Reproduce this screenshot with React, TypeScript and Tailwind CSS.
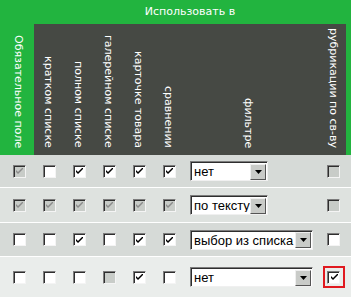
const GREEN = "bg-[#22b43f]";

type Box = { c: boolean; d?: boolean };

interface Row {
    cells: Box[];
    select: string;
    selW: string;
    last: Box;
    bg: string;
    h: string;
    mark?: boolean;
}

const rows: Row[] = [
    {
        cells: [{ c: true, d: true }, { c: false }, { c: true }, { c: true }, { c: true }, { c: true }],
        select: "нет",
        selW: "w-[78px]",
        last: { c: false, d: true },
        bg: "bg-[#d6dad7]",
        h: "h-[33px]",
    },
    {
        cells: [
            { c: true, d: true },
            { c: true, d: true },
            { c: true, d: true },
            { c: true, d: true },
            { c: true, d: true },
            { c: true, d: true },
        ],
        select: "по тексту",
        selW: "w-[78px]",
        last: { c: false, d: true },
        bg: "bg-[#dee2df]",
        h: "h-[35px]",
    },
    {
        cells: [{ c: false }, { c: false }, { c: true }, { c: false }, { c: true }, { c: true }],
        select: "выбор из списка",
        selW: "w-[123px]",
        last: { c: false },
        bg: "bg-[#d6dad7]",
        h: "h-[34px]",
    },
    {
        cells: [{ c: false }, { c: false }, { c: false }, { c: false, d: true }, { c: true }, { c: false }],
        select: "нет",
        selW: "w-[123px]",
        last: { c: true },
        bg: "bg-[#eaedeb]",
        h: "h-[41px]",
        mark: true,
    },
];

const heads = ["кратком списке", "полном списке", "галерейном списке", "карточке товара", "сравнении"];

function Check({ c, d }: Box) {
    return (
        <span
            className={`flex h-[13px] w-[13px] items-center justify-center border border-t-[#7c7c7c] border-l-[#7c7c7c] border-r-[#f4f4f4] border-b-[#f4f4f4] shadow-[inset_1px_1px_0_#2e2e2e] ${
                d ? "bg-[#c8ccc8]" : "bg-white"
            }`}
        >
            {c && (
                <svg width="7" height="7" viewBox="0 0 7 7" className="ml-[1px] mt-[1px]">
                    <path d="M0 2 L0 4 L2 6 L7 1 L7 -1 L2 4 Z" fill={d ? "#8c8c8c" : "#000"} />
                </svg>
            )}
        </span>
    );
}

function Select({ label, w }: { label: string; w: string }) {
    return (
        <div
            className={`flex h-[20px] ${w} items-center border border-t-[#7c7c7c] border-l-[#7c7c7c] border-r-[#f0f0f0] border-b-[#f0f0f0] bg-white shadow-[inset_1px_1px_0_#2e2e2e]`}
        >
            <span className="flex-1 overflow-hidden whitespace-nowrap pl-[3px] pt-[1px] font-['Liberation_Sans',sans-serif] text-[13px] leading-none text-black">
                {label}
            </span>
            <span className="mr-[1px] mt-[1px] flex h-[16px] w-[16px] shrink-0 items-center justify-center border border-t-[#eeeeee] border-l-[#eeeeee] border-r-[#555] border-b-[#555] bg-[#c9cbc8]">
                <svg width="7" height="4" viewBox="0 0 7 4">
                    <path d="M0 0 H7 L3.5 4 Z" fill="#000" />
                </svg>
            </span>
        </div>
    );
}

function Vert({ text }: { text: string }) {
    return (
        <span className="[writing-mode:vertical-rl] text-[11px] leading-none text-white whitespace-nowrap">{text}</span>
    );
}

export default function App() {
    return (
        <div className="w-[351px] h-[305px] overflow-hidden bg-white font-['DejaVu_Sans',sans-serif]">
            {/* Header */}
            <div className={`flex h-[155px] ${GREEN}`}>
                <div className="flex w-[34px] items-end justify-center pb-[7px] pl-[2px]">
                    <Vert text="Обязательное поле" />
                </div>
                <div className="flex w-[312px] flex-col">
                    <div className="flex h-[24px] items-center justify-center pt-[1px] text-[11px] text-white">
                        Использовать в
                    </div>
                    <div className="flex flex-1 bg-[#464944]">
                        {heads.map((h) => (
                            <div key={h} className="flex w-[30px] items-end justify-center pb-[7px] pr-[1px]">
                                <Vert text={h} />
                            </div>
                        ))}
                        <div className="flex w-[134px] items-end justify-center pb-[7px] pr-[6px]">
                            <Vert text="фильтре" />
                        </div>
                        <div className="flex w-[28px] items-end justify-center pb-[7px] pl-[2px]">
                            <Vert text="рубрикации по св-ву" />
                        </div>
                    </div>
                </div>
            </div>

            {/* Rows */}
            {rows.map((r, i) => (
                <div key={i} className={`flex ${r.h} ${r.bg} border-b border-white`}>
                    <div className="flex w-[34px] items-center justify-center pl-[4px]">
                        <Check {...r.cells[0]} />
                    </div>
                    {r.cells.slice(1).map((c, j) => (
                        <div key={j} className="flex w-[30px] items-center justify-center">
                            <Check {...c} />
                        </div>
                    ))}
                    <div className="flex w-[134px] items-center pl-[6px]">
                        <Select label={r.select} w={r.selW} />
                    </div>
                    <div className="flex w-[28px] items-center justify-center pl-[3px]">
                        {r.mark ? (
                            <span className="flex h-[22px] w-[22px] items-center justify-center border-2 border-[#e0191f]">
                                <Check {...r.last} />
                            </span>
                        ) : (
                            <Check {...r.last} />
                        )}
                    </div>
                </div>
            ))}
        </div>
    );
}
